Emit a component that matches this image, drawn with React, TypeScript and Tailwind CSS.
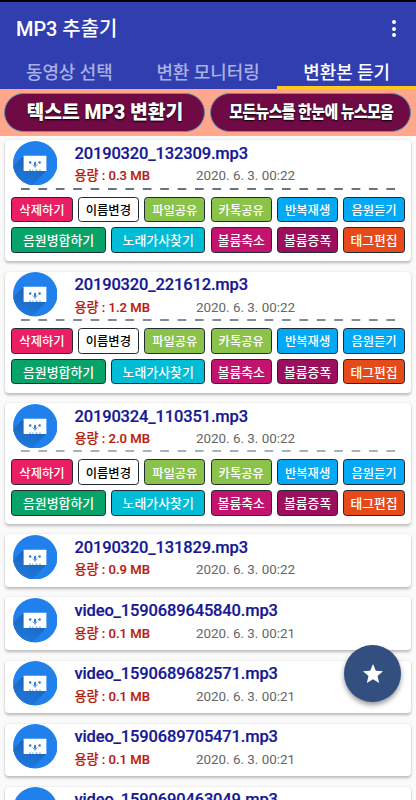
import React from 'react';

const FONT = "font-['Roboto','Noto_Sans_CJK_KR',sans-serif]";

type Item = { name: string; size: string; date: string; open?: boolean; dash?: string };

const items: Item[] = [
  { name: '20190320_132309.mp3', size: '0.3', date: '2020. 6. 3. 00:22', open: true, dash: '#344858' },
  { name: '20190320_221612.mp3', size: '1.2', date: '2020. 6. 3. 00:22', open: true, dash: '#566673' },
  { name: '20190324_110351.mp3', size: '2.0', date: '2020. 6. 3. 00:22', open: true, dash: '#8b98a2' },
  { name: '20190320_131829.mp3', size: '0.9', date: '2020. 6. 3. 00:22' },
  { name: 'video_1590689645840.mp3', size: '0.1', date: '2020. 6. 3. 00:21' },
  { name: 'video_1590689682571.mp3', size: '0.1', date: '2020. 6. 3. 00:21' },
  { name: 'video_1590689705471.mp3', size: '0.1', date: '2020. 6. 3. 00:21' },
  { name: 'video_1590690463049.mp3', size: '0.1', date: '2020. 6. 3. 00:21' },
];

const actions = [
  { label: '삭제하기', cls: 'col-span-2 text-[12.3px] bg-[#e91e63] text-white' },
  { label: '이름변경', cls: 'col-span-2 text-[12.3px] bg-white text-black' },
  { label: '파일공유', cls: 'col-span-2 text-[12.3px] bg-[#8bc34a] text-white' },
  { label: '카톡공유', cls: 'col-span-2 text-[12.3px] bg-[#8bc34a] text-white' },
  { label: '반복재생', cls: 'col-span-2 text-[12.3px] bg-[#03a9f4] text-white' },
  { label: '음원듣기', cls: 'col-span-2 text-[12.3px] bg-[#03a9f4] text-white' },
  { label: '음원병합하기', cls: 'col-span-3 text-[12.9px] bg-[#08a368] text-white' },
  { label: '노래가사찾기', cls: 'col-span-3 text-[12.9px] bg-[#00bcd4] text-white' },
  { label: '볼륨축소', cls: 'col-span-2 text-[12.8px] bg-[#c2146f] text-white' },
  { label: '볼륨증폭', cls: 'col-span-2 text-[12.8px] bg-[#9c0f5c] text-white' },
  { label: '태그편집', cls: 'col-span-2 text-[12.8px] bg-[#e64a19] text-white' },
];

function TapeIcon() {
  return (
    <svg viewBox="0 0 44 44" className="h-[44.5px] w-[44.5px] shrink-0">
      <defs>
        <clipPath id="disc">
          <circle cx="22" cy="22" r="22" />
        </clipPath>
        <linearGradient id="shade" x1="0.6" y1="0.2" x2="0.3" y2="0.9">
          <stop offset="0" stopColor="#1a66bd" />
          <stop offset="1" stopColor="#1f7ae0" />
        </linearGradient>
      </defs>
      <circle cx="22" cy="22" r="22" fill="#2080ec" />
      <path d="M10.5 14.5L-3 28v18h20L33 29.5z" fill="url(#shade)" clipPath="url(#disc)" />
      <rect x="10.5" y="14.5" width="22.5" height="15.2" rx="0.6" fill="#fff" />
      <circle cx="17" cy="21.3" r="1.2" fill="#2b78cf" />
      <circle cx="26.3" cy="21.3" r="1.2" fill="#2b78cf" />
      <rect x="20.8" y="20.6" width="2" height="4" rx="1" fill="#2b78cf" />
      <path d="M19.4 23.2q2.4 3.8 4.8 0M21.8 25v1.6" fill="none" stroke="#2b78cf" strokeWidth="0.7" />
      <path d="M16 28.8h1.6M19 28.8h1M22.5 28.8h1.6M26 28.8h1.4" stroke="#2b78cf" strokeWidth="0.9" />
    </svg>
  );
}

function Card({ item }: { item: Item }) {
  return (
    <article
      className={`w-full shrink-0 rounded-[4px] bg-white px-[6.4px] shadow-[0_1.5px_3px_rgba(0,0,0,0.26)] ${
        item.open ? 'h-[121px]' : 'h-[52.7px]'
      }`}
    >
      <div className="flex h-[47.4px] pl-[1.2px] pt-[0.6px]">
        <TapeIcon />
        <div className="flex flex-col pl-[17.4px]">
          <h2 className="h-[25.5px] whitespace-nowrap text-[16.5px] font-medium leading-[25.5px] tracking-[-0.15px] text-[#151894] [-webkit-text-stroke:0.2px_#151894]">
            {item.name}
          </h2>
          <div className="flex h-[20px] items-center whitespace-nowrap text-[13.1px] leading-[20px]">
            <span className="w-[121.5px] font-medium text-[#b71c0c] [-webkit-text-stroke:0.15px_#b71c0c]">
              용량 : {item.size} MB
            </span>
            <span className="text-[13.4px] text-[#666]">{item.date}</span>
          </div>
        </div>
      </div>
      {item.open && (
        <>
          <svg className="ml-[9.4px] block h-[2px] w-[374px]">
            <line x1="0" x2="374" y1="1" y2="1" stroke={item.dash} strokeWidth="1.4" strokeDasharray="8.7 8.7" />
          </svg>
          <div className="mt-[7px] grid grid-cols-12 gap-x-[5.3px] gap-y-[5px]">
            {actions.map((a) => (
              <button
                key={a.label}
                className={`flex h-[25.7px] items-center justify-center whitespace-nowrap rounded-[3.5px] border border-[#202a35] pt-[3px] font-medium leading-none ${a.cls}`}
              >
                {a.label}
              </button>
            ))}
          </div>
        </>
      )}
    </article>
  );
}

export default function App() {
  return (
    <div className={`relative flex h-[800px] w-[416px] flex-col overflow-hidden bg-[#fafafa] ${FONT}`}>
      <header className="h-[89px] shrink-0 border-t-2 border-black bg-[#303eb0]">
        <div className="flex h-[51px] items-center justify-between pl-4 pr-5 pt-[2px]">
          <h1 className="pt-[2px] text-[19.9px] font-medium leading-none text-white">MP3 추출기</h1>
          <div className="flex flex-col gap-[2.2px]">
            <i className="size-[4px] rounded-full bg-white" />
            <i className="size-[4px] rounded-full bg-white" />
            <i className="size-[4px] rounded-full bg-white" />
          </div>
        </div>
        <nav className="grid h-[36px] grid-cols-3 text-center text-[17.9px] font-medium text-[#aab0e2]">
          <span className="h-[36px] pt-[3px] leading-[33px]">동영상 선택</span>
          <span className="h-[36px] pt-[3px] leading-[33px]">변환 모니터링</span>
          <span className="h-[36px] border-b-[3px] border-[#ffc81e] pt-[3px] leading-[33px] text-white">변환본 듣기</span>
        </nav>
      </header>
      <div className="flex h-[47px] shrink-0 gap-[5px] bg-[#ffa68b] pl-[4.3px] pr-[4.6px] pt-[4px]">
        {['텍스트 MP3 변환기', '모든뉴스를 한눈에 뉴스모음'].map((t, i) => (
          <div
            key={t}
            className="flex h-[38.5px] min-w-0 flex-1 items-center justify-center rounded-full border-[1.5px] border-[#5694b4] bg-[#700a45] pt-[2px]"
          >
            <span
              className={`whitespace-nowrap font-black text-white [text-shadow:0_1px_2px_#000] ${
                i === 0 ? 'text-[19.3px]' : 'scale-x-[0.87] text-[17.2px] tracking-[-0.7px]'
              }`}
            >
              {t}
            </span>
          </div>
        ))}
      </div>
      <main className="flex flex-col gap-[10.4px] px-[5px] pt-[4.2px]">
        {items.map((item) => (
          <Card key={item.name} item={item} />
        ))}
      </main>
      <button className="absolute left-[344px] top-[645px] flex size-[57px] items-center justify-center rounded-full bg-[#334f80] shadow-[0_3px_5px_rgba(0,0,0,0.4)]">
        <svg viewBox="0 0 24 24" className="size-[24px]" fill="#fff">
          <path d="M12 17.27L18.18 21l-1.64-7.03L22 9.24l-7.19-.61L12 2 9.19 8.63 2 9.24l5.46 4.73L5.82 21z" />
        </svg>
      </button>
    </div>
  );
}
